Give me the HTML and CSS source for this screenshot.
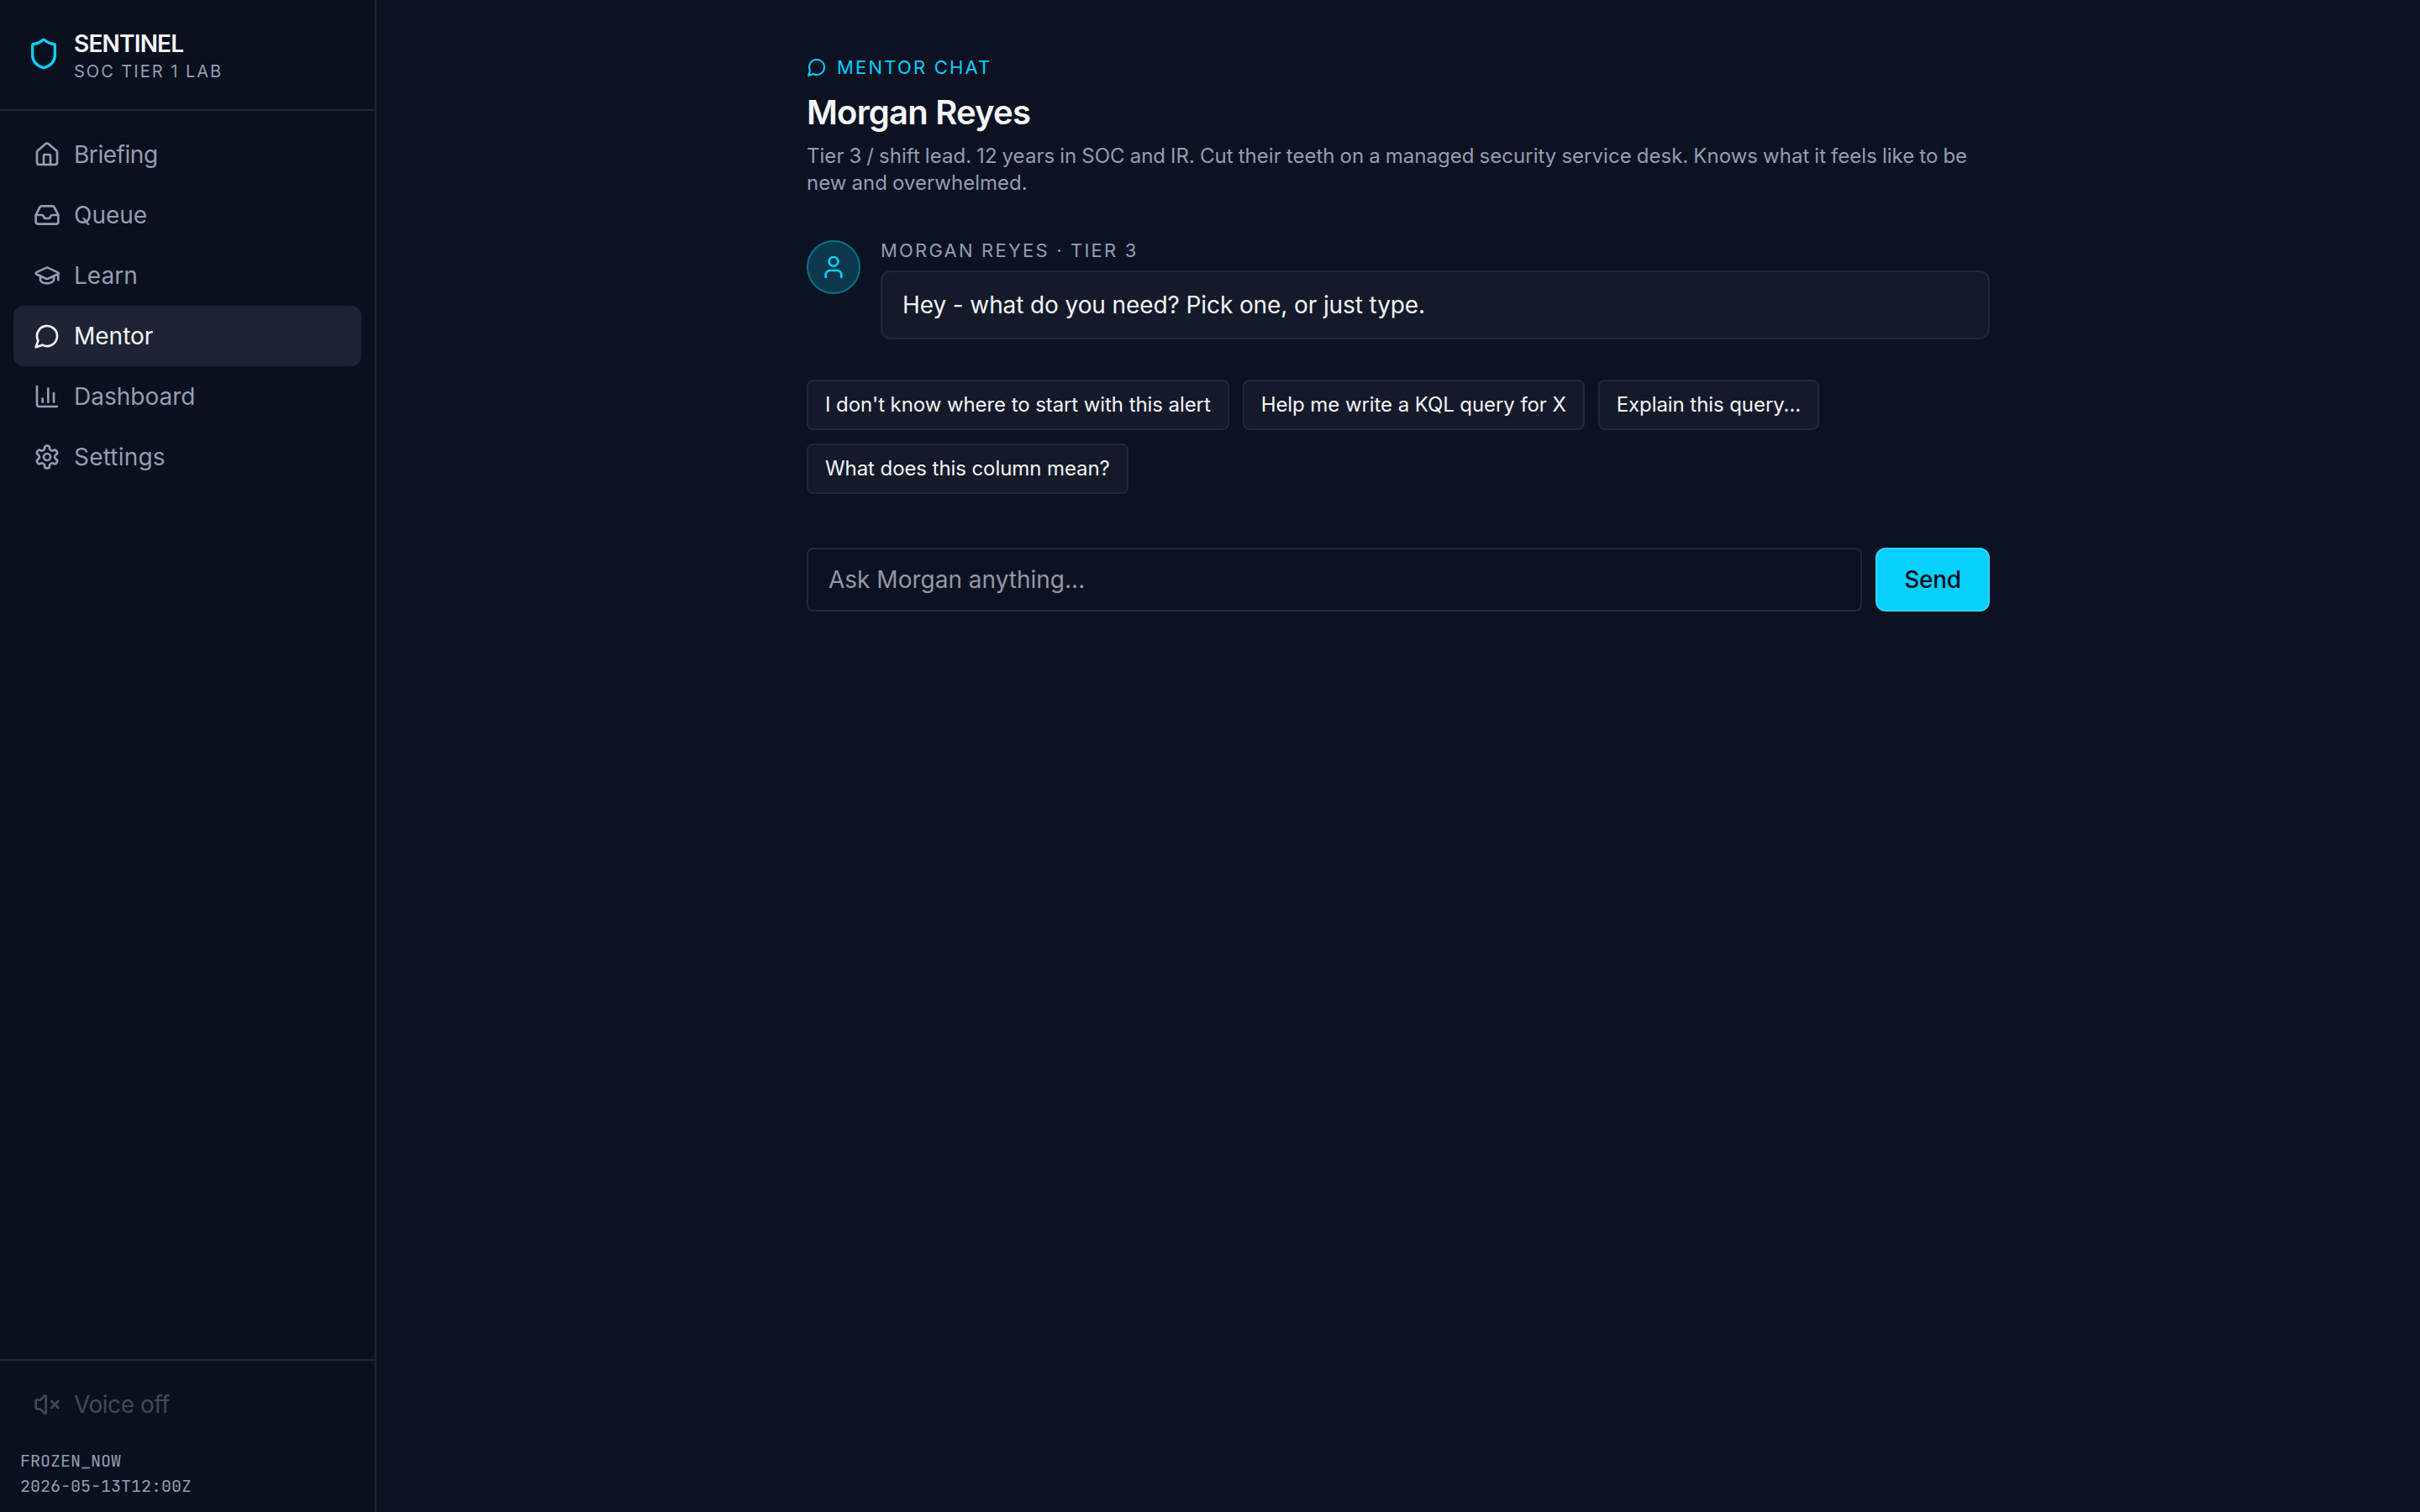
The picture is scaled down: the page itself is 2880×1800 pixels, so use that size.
FILE: index.html
```html
<!DOCTYPE html>
<html lang="en">
<head>
    <meta charset="UTF-8">
    <meta name="viewport" content="width=device-width, initial-scale=1.0">
    <title>Sentinel - Mentor</title>
    <link rel="stylesheet" href="styles.css">
</head>
<body>
    <aside class="sidebar">
        <div class="brand">
            <svg class="icon brand-icon" viewBox="0 0 24 24"><path d="M20 13c0 5-3.5 7.5-7.66 8.95a1 1 0 0 1-.67-.01C7.5 20.5 4 18 4 13V6a1 1 0 0 1 1-1c2 0 4.5-1.2 6.24-2.72a1.17 1.17 0 0 1 1.52 0C14.51 3.81 17 5 19 5a1 1 0 0 1 1 1z"/></svg>
            <div>
                <div class="brand-name">SENTINEL</div>
                <div class="brand-sub">SOC Tier 1 Lab</div>
            </div>
        </div>

        <nav class="nav">
            <a class="nav-item tight">
                <svg class="icon" viewBox="0 0 24 24"><path d="M15 21v-8a1 1 0 0 0-1-1h-4a1 1 0 0 0-1 1v8"/><path d="M3 10a2 2 0 0 1 .709-1.528l7-5.999a2 2 0 0 1 2.582 0l7 5.999A2 2 0 0 1 21 10v9a2 2 0 0 1-2 2H5a2 2 0 0 1-2-2z"/></svg>
                <span>Briefing</span>
            </a>
            <a class="nav-item">
                <svg class="icon" viewBox="0 0 24 24"><polyline points="22 12 16 12 14 15 10 15 8 12 2 12"/><path d="M5.45 5.11 2 12v6a2 2 0 0 0 2 2h16a2 2 0 0 0 2-2v-6l-3.45-6.89A2 2 0 0 0 16.76 4H7.24a2 2 0 0 0-1.79 1.11z"/></svg>
                <span>Queue</span>
            </a>
            <a class="nav-item">
                <svg class="icon" viewBox="0 0 24 24"><path d="M21.42 10.922a1 1 0 0 0-.019-1.838L12.83 5.18a2 2 0 0 0-1.66 0L2.6 9.08a1 1 0 0 0 0 1.832l8.57 3.908a2 2 0 0 0 1.66 0z"/><path d="M22 10v6"/><path d="M6 12.5V16a6 3 0 0 0 12 0v-3.5"/></svg>
                <span>Learn</span>
            </a>
            <a class="nav-item active">
                <svg class="icon" viewBox="0 0 24 24"><path d="M7.9 20A9 9 0 1 0 4 16.1L2 22Z"/></svg>
                <span>Mentor</span>
            </a>
            <a class="nav-item">
                <svg class="icon" viewBox="0 0 24 24"><path d="M3 3v16a2 2 0 0 0 2 2h16"/><path d="M18 17V9"/><path d="M13 17V5"/><path d="M8 17v-3"/></svg>
                <span>Dashboard</span>
            </a>
            <a class="nav-item wide">
                <svg class="icon" viewBox="0 0 24 24"><path d="M12.22 2h-.44a2 2 0 0 0-2 2v.18a2 2 0 0 1-1 1.73l-.43.25a2 2 0 0 1-2 0l-.15-.08a2 2 0 0 0-2.73.73l-.22.38a2 2 0 0 0 .73 2.73l.15.1a2 2 0 0 1 1 1.72v.51a2 2 0 0 1-1 1.74l-.15.09a2 2 0 0 0-.73 2.73l.22.38a2 2 0 0 0 2.73.73l.15-.08a2 2 0 0 1 2 0l.43.25a2 2 0 0 1 1 1.73V20a2 2 0 0 0 2 2h.44a2 2 0 0 0 2-2v-.18a2 2 0 0 1 1-1.73l.43-.25a2 2 0 0 1 2 0l.15.08a2 2 0 0 0 2.73-.73l.22-.39a2 2 0 0 0-.73-2.73l-.15-.08a2 2 0 0 1-1-1.74v-.5a2 2 0 0 1 1-1.74l.15-.09a2 2 0 0 0 .73-2.73l-.22-.38a2 2 0 0 0-2.73-.73l-.15.08a2 2 0 0 1-2 0l-.43-.25a2 2 0 0 1-1-1.73V4a2 2 0 0 0-2-2z"/><circle cx="12" cy="12" r="3"/></svg>
                <span>Settings</span>
            </a>
        </nav>

        <div class="sidebar-footer">
            <div class="nav-item tight disabled">
                <svg class="icon" viewBox="0 0 24 24"><path d="M11 4.702a.705.705 0 0 0-1.203-.498L6.413 7.587A1.4 1.4 0 0 1 5.416 8H3a1 1 0 0 0-1 1v6a1 1 0 0 0 1 1h2.416a1.4 1.4 0 0 1 .997.413l3.383 3.384A.705.705 0 0 0 11 19.298z"/><path d="M22 9l-6 6"/><path d="M16 9l6 6"/></svg>
                <span>Voice off</span>
            </div>
            <div class="clock">
                <div>FROZEN_NOW</div>
                <div>2026-05-13T12:00Z</div>
            </div>
        </div>
    </aside>

    <main class="main">
        <div class="content">
            <header class="page-header">
                <div class="eyebrow">
                    <svg class="icon" viewBox="0 0 24 24"><path d="M7.9 20A9 9 0 1 0 4 16.1L2 22Z"/></svg>
                    <span>Mentor chat</span>
                </div>
                <h1>Morgan Reyes</h1>
                <p>Tier 3 / shift lead. 12 years in SOC and IR. Cut their teeth on a managed security service desk. Knows what it feels like to be new and overwhelmed.</p>
            </header>

            <div class="message">
                <div class="avatar">
                    <svg class="icon" viewBox="0 0 24 24"><path d="M19 21v-2a4 4 0 0 0-4-4H9a4 4 0 0 0-4 4v2"/><circle cx="12" cy="7" r="4"/></svg>
                </div>
                <div class="message-body">
                    <div class="message-author">Morgan Reyes · Tier 3</div>
                    <div class="bubble">Hey - what do you need? Pick one, or just type.</div>
                </div>
            </div>

            <div class="chips">
                <button class="chip">I don't know where to start with this alert</button>
                <button class="chip">Help me write a KQL query for X</button>
                <button class="chip">Explain this query...</button>
                <button class="chip">What does this column mean?</button>
            </div>

            <form class="composer">
                <input type="text" placeholder="Ask Morgan anything...">
                <button type="button" class="send">Send</button>
            </form>
        </div>
    </main>
</body>
</html>
```
FILE: styles.css
```css
*{
    margin: 0;
    padding: 0;
    box-sizing: border-box;
}
body{
    display: flex;
    height: 100vh;
    background-color: #0c1221;
    color: #f4f5f7;
    font-family: Inter, "Liberation Sans", sans-serif;
    font-size: 28px;
    line-height: 40px;
}
button, input{
    font: inherit;
    color: inherit;
}
.icon{
    width: 32px;
    height: 32px;
    flex-shrink: 0;
    fill: none;
    stroke: currentColor;
    stroke-width: 2;
    stroke-linecap: round;
    stroke-linejoin: round;
}

/* sidebar */
.sidebar{
    display: flex;
    flex-direction: column;
    width: 448px;
    flex-shrink: 0;
    background-color: #0a101d;
    border-right: 2px solid #202633;
}
.brand{
    display: flex;
    gap: 16px;
    padding: 32px;
    border-bottom: 2px solid #202633;
}
.brand-icon{
    width: 40px;
    height: 40px;
    margin-top: 12px;
    color: #08d0fc;
}
.brand-name{
    font-weight: 600;
    letter-spacing: -0.8px;
}
.brand-sub{
    color: #949eb2;
    font-size: 20px;
    line-height: 26px;
    letter-spacing: 0.1em;
    text-transform: uppercase;
}
.nav{
    flex: 1;
    padding: 16px;
}
.nav-item{
    display: flex;
    align-items: center;
    gap: 16px;
    padding: 16px 24px;
    border-radius: 12px;
    color: #949eb2;
}
.nav-item.tight{
    letter-spacing: -0.45px;
}
.nav-item.wide{
    letter-spacing: 0.2px;
}
.nav-item.active{
    background-color: #1e2435;
    color: #f4f5f7;
}
.nav-item.disabled{
    opacity: 0.4;
}
.sidebar-footer{
    padding: 16px;
    border-top: 2px solid #202633;
}
.clock{
    margin-top: 16px;
    padding: 0 8px;
    color: #949eb2;
    font-family: "JetBrains Mono", "Liberation Mono", monospace;
    font-size: 20px;
    line-height: 30px;
}

/* mentor chat */
.main{
    flex: 1;
}
.content{
    width: 1536px;
    margin: 0 auto;
    padding: 64px;
}
.page-header{
    margin-bottom: 48px;
}
.eyebrow{
    display: flex;
    align-items: center;
    gap: 12px;
    margin-bottom: 10px;
    color: #08d0fc;
    font-size: 22px;
    line-height: 32px;
    letter-spacing: 0.1em;
    text-transform: uppercase;
}
.eyebrow .icon{
    width: 24px;
    height: 24px;
}
h1{
    font-size: 40px;
    font-weight: 600;
    line-height: 56px;
    letter-spacing: -0.8px;
}
.page-header p{
    margin-top: 8px;
    color: #949eb2;
    font-size: 24px;
    line-height: 32px;
    letter-spacing: 0.03px;
    word-spacing: -0.76px;
}
.message{
    display: flex;
    gap: 24px;
    margin-bottom: 48px;
}
.avatar{
    display: flex;
    align-items: center;
    justify-content: center;
    width: 64px;
    height: 64px;
    flex-shrink: 0;
    margin-top: 4px;
    border: 2px solid #0a6f8b;
    border-radius: 50%;
    background-color: #0b384c;
    color: #08d0fc;
}
.message-body{
    flex: 1;
}
.message-author{
    margin-bottom: 8px;
    color: #949eb2;
    font-size: 22px;
    line-height: 32px;
    letter-spacing: 0.1em;
    text-transform: uppercase;
}
.bubble{
    padding: 16px 24px;
    border: 2px solid #222837;
    border-radius: 12px;
    background-color: #141a2a;
    line-height: 46px;
    letter-spacing: -0.1px;
}
.chips{
    display: flex;
    flex-wrap: wrap;
    gap: 16px;
    margin-bottom: 64px;
}
.chip{
    padding: 12px 20px;
    border: 2px solid #222837;
    border-radius: 8px;
    background-color: #141a2a;
    font-size: 24px;
    line-height: 32px;
    letter-spacing: -0.08px;
}
.composer{
    display: flex;
    gap: 16px;
}
.composer input{
    flex: 1;
    padding: 16px 24px;
    border: 2px solid #222837;
    border-radius: 8px;
    background-color: transparent;
}
.composer input::placeholder{
    color: #9299a6;
}
.send{
    width: 136px;
    border: 2px solid #2bd8fc;
    border-radius: 12px;
    background-color: #08d0fc;
    color: #0a101c;
    font-weight: 500;
    letter-spacing: -0.3px;
}
```
